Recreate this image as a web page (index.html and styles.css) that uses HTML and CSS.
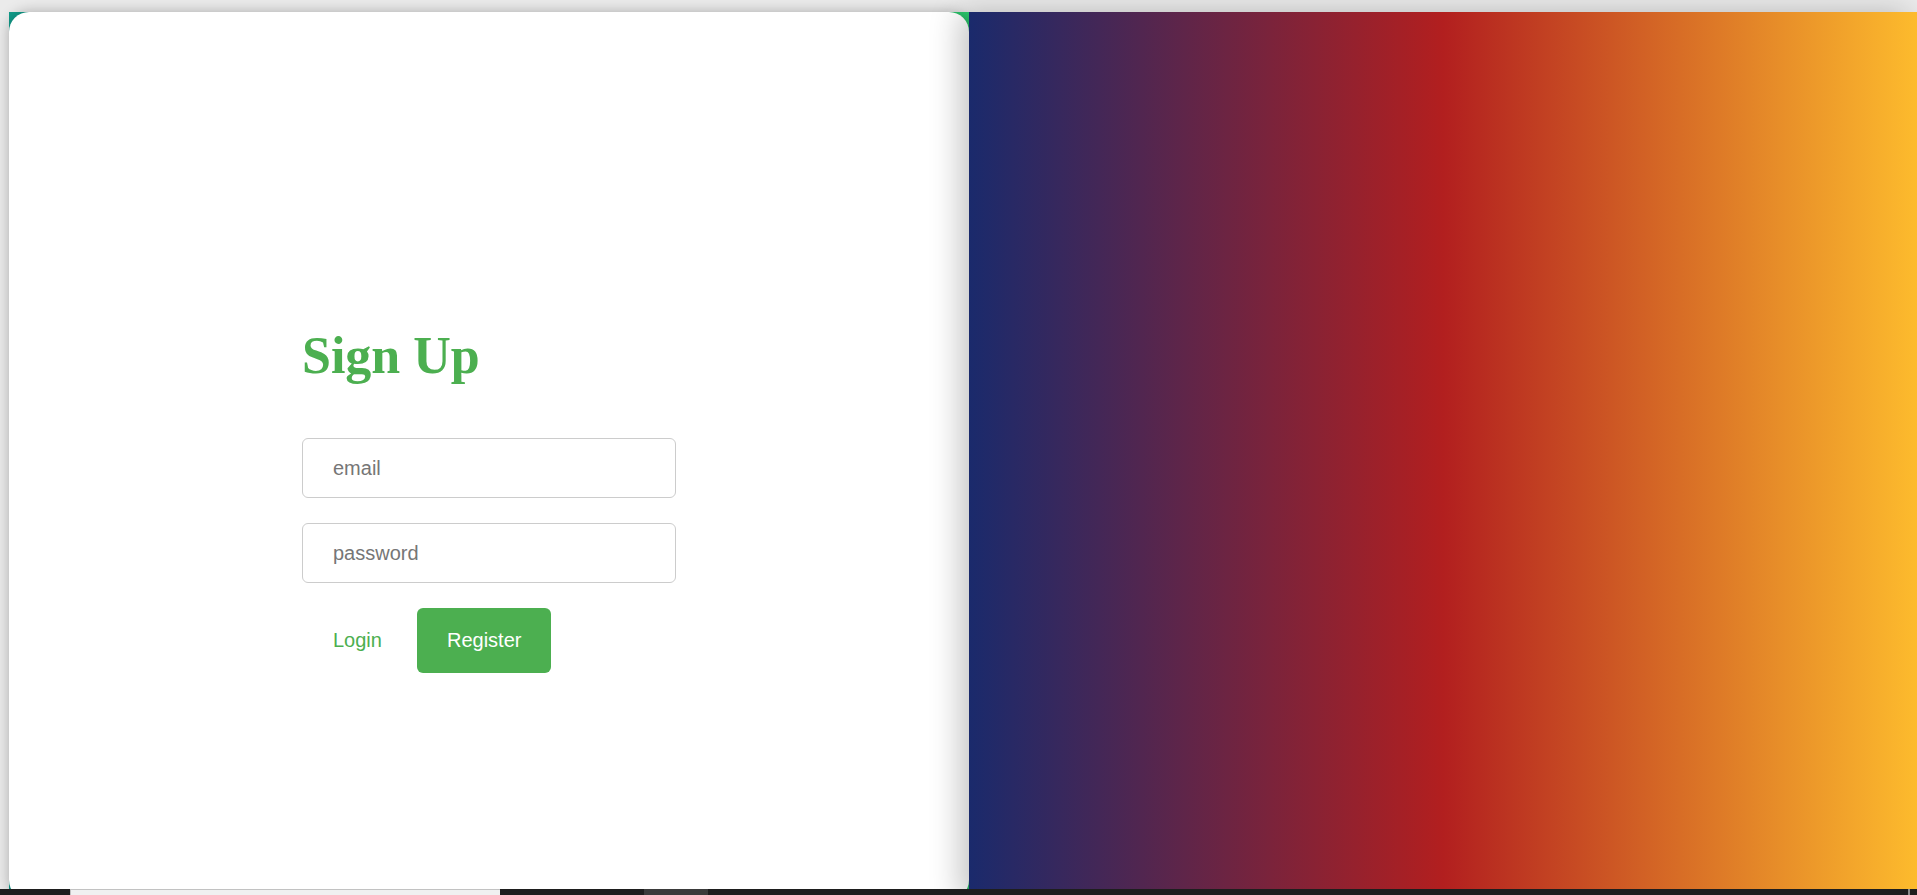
FILE: index.html
```html
<!DOCTYPE html>
<html lang="en">
<head>
<meta charset="utf-8">
<title>Sign Up</title>
<link rel="stylesheet" href="styles.css">
</head>
<body>
  <div class="page">
    <div class="stage">
      <div class="left-col">
        <div class="card">
          <form class="form">
            <h1 class="title">Sign Up</h1>
            <input class="field" type="email" placeholder="email">
            <input class="field" type="password" placeholder="password">
            <div class="actions">
              <button type="button" class="btn btn-link">Login</button>
              <button type="button" class="btn btn-primary">Register</button>
            </div>
          </form>
        </div>
      </div>
      <div class="art"></div>
    </div>
  </div>
  <div class="taskbar">
    <span class="tb-dark tb-a"></span>
    <span class="tb-light"></span>
    <span class="tb-dark tb-b"></span>
    <span class="tb-mid"></span>
    <span class="tb-dark tb-c"></span>
    <span class="tb-line"></span>
    <span class="tb-dark tb-d"></span>
  </div>
</body>
</html>
```

FILE: styles.css
```css
* { box-sizing: border-box; }

html, body {
  margin: 0;
  padding: 0;
  height: 895px;
  overflow: hidden;
}

body {
  background: #ebebeb;
  font-family: "Liberation Sans", Arial, sans-serif;
}

.page {
  height: 900px;
  display: flex;
  flex-direction: column;
}

.stage {
  flex: 1;
  display: flex;
  margin: 12px 0 0 9px;
}

.left-col {
  width: 960px;
  flex: none;
  background: linear-gradient(to right, #119d8b, #2ed573);
  display: flex;
}

.card {
  flex: 1;
  background: #fff;
  border-radius: 20px;
  box-shadow: 0 0 14px rgba(0, 0, 0, 0.28);
  display: flex;
  justify-content: center;
  padding-top: 314px;
}

.form {
  width: 374px;
  display: flex;
  flex-direction: column;
}

.title {
  margin: 0 0 52px;
  font-family: "Liberation Serif", "Times New Roman", serif;
  font-weight: bold;
  font-size: 52px;
  line-height: 60px;
  color: #4caf50;
}

.field {
  width: 374px;
  height: 60px;
  border: 1px solid #cccccc;
  border-radius: 6px;
  padding: 0 30px;
  margin: 0 0 25px;
  font-family: "Liberation Sans", Arial, sans-serif;
  font-size: 20px;
  color: #333;
  background: #fff;
  outline: none;
}

.field::placeholder {
  color: #767676;
}

.actions {
  display: flex;
  gap: 4px;
}

.btn {
  height: 65px;
  padding: 0 30px;
  border: 1px solid transparent;
  border-radius: 6px;
  font-family: "Liberation Sans", Arial, sans-serif;
  font-size: 20px;
  cursor: pointer;
}

.btn-link {
  background: transparent;
  color: #4caf50;
}

.btn-primary {
  background: #4caf50;
  color: #fff;
  padding: 0 29px;
}

.art {
  flex: 1;
  position: relative;
  background: linear-gradient(to right, #1a2a6c, #b21f1f, #fdbb2d);
  box-shadow: -10px 0 28px rgba(0, 0, 0, 0.22);
}

.taskbar {
  position: fixed;
  left: 0;
  right: 0;
  bottom: 0;
  z-index: 10;
  height: 6px;
  display: flex;
  background: #1e1e1e;
}

.taskbar span { display: block; height: 6px; }

.tb-dark { background: #1e1e1e; }
.tb-a { width: 70px; }
.tb-light {
  width: 430px;
  background: #f0f0f0;
  border-top: 1px solid #c2c2c2;
  border-left: 1px solid #c2c2c2;
}
.tb-b { width: 144px; }
.tb-mid { width: 64px; background: #3b3b3b; }
.tb-c { width: 1200px; }
.tb-line { width: 2px; background: #8a8a8a; }
.tb-d { flex: 1; }
```
